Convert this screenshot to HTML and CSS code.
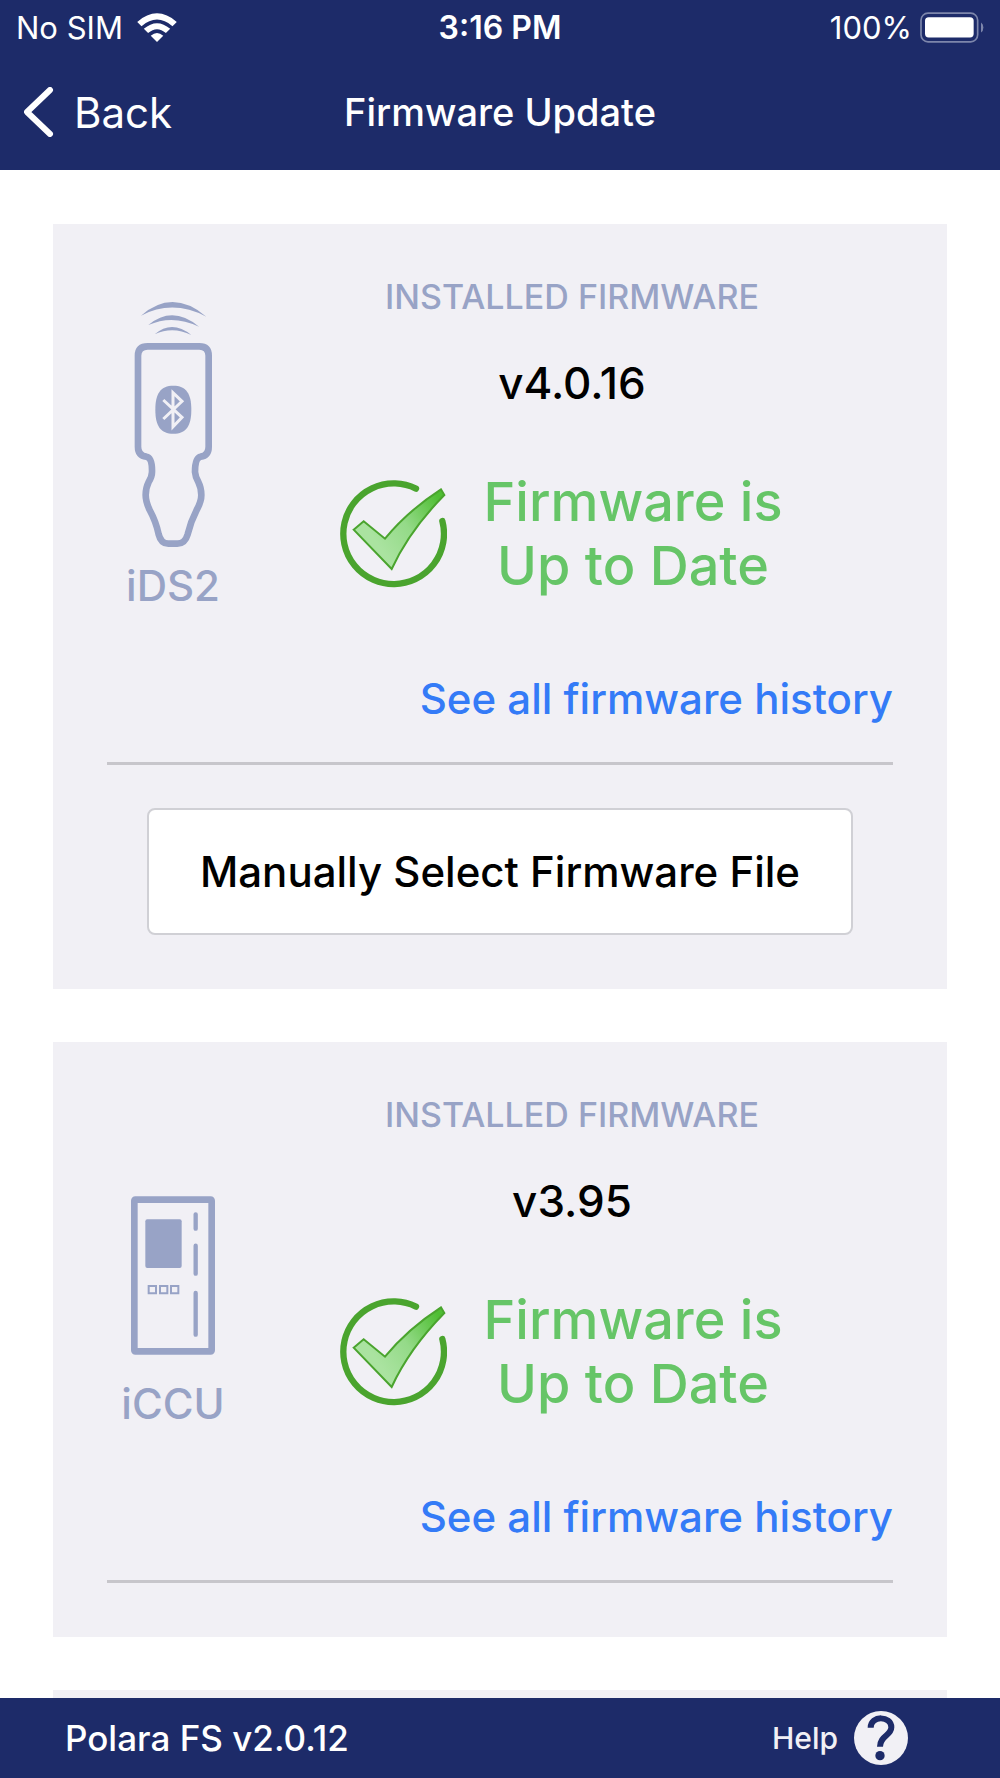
FILE: index.html
```html
<!DOCTYPE html>
<html lang="en">
<head>
    <meta charset="UTF-8">
    <meta name="viewport" content="width=device-width, initial-scale=1.0">
    <title>Firmware Update</title>
    <link rel="stylesheet" href="styles.css">
</head>
<body>
    <header class="header">
        <div class="status-bar">
            <div class="carrier">
                <span>No SIM</span>
                <svg class="wifi" viewBox="0 0 120 88" fill="#fff" aria-hidden="true">
                    <path d="M60 88 L41 69 Q60 53 79 69 Z"/>
                    <path d="M33 61 L20 48 Q60 14 100 48 L87 61 Q60 38 33 61 Z"/>
                    <path d="M13 40 L0 27 Q60 -25 120 27 L107 40 Q60 0 13 40 Z"/>
                </svg>
            </div>
            <span class="time">3:16 PM</span>
            <div class="battery">
                <span>100%</span>
                <svg class="battery-icon" viewBox="0 0 192 92" aria-hidden="true">
                    <rect x="3" y="3" width="170" height="86" rx="21" fill="none" stroke="#7d86ab" stroke-width="5"/>
                    <rect x="15" y="15" width="146" height="61" rx="11" fill="#fff"/>
                    <path d="M183 31 Q190 35 190 46 Q190 57 183 61 Z" fill="#7d86ab"/>
                </svg>
            </div>
        </div>
        <nav class="nav-bar">
            <a class="back" href="#">
                <svg class="chevron" viewBox="0 0 30 50" aria-hidden="true">
                    <path d="M26 3 L3 25 L26 47" fill="none" stroke="#fff" stroke-width="6" stroke-linecap="round" stroke-linejoin="round"/>
                </svg>
                <span>Back</span>
            </a>
            <h1>Firmware Update</h1>
        </nav>
    </header>

    <main class="content">
        <section class="card">
            <div class="card-body">
                <div class="device">
                    <svg class="device-icon" viewBox="21 66 396 750" fill="none" stroke="#98a3c6" aria-hidden="true">
                        <g fill="#98a3c6" stroke="none">
                            <path d="M123 107 Q218 24 319 110 Q218 57 123 107 Z"/>
                            <path d="M145 135 Q218 74 297 140 Q218 102 145 135 Z"/>
                            <path d="M164 163 Q216 118 274 165 Q218 138 164 163 Z"/>
                            <path d="M220 317 C258 317 274 340 274 389 C274 438 258 461 220 461 C182 461 166 438 166 389 C166 340 182 317 220 317 Z"/>
                        </g>
                        <path d="M143 199 H298 Q326 199 326 227 V500 Q326 527 302 530 Q285 533 285 576 Q286 590 295 606 Q304 624 304 645 Q304 665 290 690 Q272 725 263 763 Q255 791 232 791 H205 Q183 791 176 763 Q168 725 149 690 Q137 665 137 645 Q137 624 146 606 Q156 590 156 576 Q157 533 139 530 Q114 527 114 500 V227 Q114 199 143 199 Z" stroke-width="20"/>
                        <path d="M190 360 L246 412 L219 440 V338 L246 364 L190 417" stroke="#f1f0f5" stroke-width="9"/>
                    </svg>
                    <h2>iDS2</h2>
                </div>
                <div class="info">
                    <h3>INSTALLED FIRMWARE</h3>
                    <p class="version">v4.0.16</p>
                    <div class="status">
                        <svg class="check" viewBox="24 28 324 324" aria-hidden="true">
                            <defs>
                                <linearGradient id="tick" gradientUnits="userSpaceOnUse" x1="140" y1="220" x2="330" y2="90">
                                    <stop offset="0" stop-color="#aae3a0"/>
                                    <stop offset="0.45" stop-color="#94da88"/>
                                    <stop offset="1" stop-color="#4fbe33"/>
                                </linearGradient>
                            </defs>
                            <path d="M255 54 A151 151 0 1 0 334 151" fill="none" stroke="#4aa42e" stroke-width="19" stroke-linecap="round"/>
                            <path d="M68 177 L98 152 L162 204 Q230 121 330 56 L340 73 Q235 180 182 295 Z" fill="url(#tick)" stroke="#4aa42e" stroke-width="6"/>
                        </svg>
                        <p>Firmware is<br>Up to Date</p>
                    </div>
                    <a class="history" href="#">See all firmware history</a>
                </div>
            </div>
            <button class="btn" type="button">Manually Select Firmware File</button>
        </section>

        <section class="card">
            <div class="card-body">
                <div class="device">
                    <svg class="device-icon" viewBox="21 -150 396 750" fill="none" stroke="#98a3c6" aria-hidden="true">
                        <rect x="103" y="89" width="232" height="455" rx="3" stroke-width="20"/>
                        <rect x="136" y="148" width="109" height="146" rx="6" fill="#98a3c6" stroke="none"/>
                        <path d="M287 133 V176 M287 227 V311 M287 369 V494" stroke-width="13" stroke-linecap="round"/>
                        <path d="M146 348 H168 V370 H146 Z M180 348 H202 V370 H180 Z M213 348 H235 V370 H213 Z" stroke-width="6"/>
                    </svg>
                    <h2>iCCU</h2>
                </div>
                <div class="info">
                    <h3>INSTALLED FIRMWARE</h3>
                    <p class="version">v3.95</p>
                    <div class="status">
                        <svg class="check" viewBox="24 28 324 324" aria-hidden="true">
                            <path d="M255 54 A151 151 0 1 0 334 151" fill="none" stroke="#4aa42e" stroke-width="19" stroke-linecap="round"/>
                            <path d="M68 177 L98 152 L162 204 Q230 121 330 56 L340 73 Q235 180 182 295 Z" fill="url(#tick)" stroke="#4aa42e" stroke-width="6"/>
                        </svg>
                        <p>Firmware is<br>Up to Date</p>
                    </div>
                    <a class="history" href="#">See all firmware history</a>
                </div>
            </div>
        </section>

        <section class="card"></section>
    </main>

    <footer class="footer">
        <span class="app-version">Polara FS v2.0.12</span>
        <a class="help" href="#">
            <span>Help</span>
            <svg class="help-icon" viewBox="0 0 162 162" aria-hidden="true">
                <circle cx="81" cy="81" r="81" fill="#f1f0f5"/>
                <path d="M50 50 C50 12 112 14 112 49 C112 74 78 74 78 107" fill="none" stroke="#1d2b69" stroke-width="18"/>
                <circle cx="78" cy="134" r="14" fill="#1d2b69"/>
            </svg>
        </a>
    </footer>
</body>
</html>
```

FILE: styles.css
```css
:root {
    --navy: #1d2b69;
    --card: #f1f0f5;
    --muted: #98a3c6;
    --green: #66c567;
    --blue: #347bf7;
    --line: #c7c6cb;
}

* {
    margin: 0;
    padding: 0;
    box-sizing: border-box;
}

body {
    font-family: Inter, "Liberation Sans", sans-serif;
    font-weight: 500;
    background: white;
    color: black;
    height: 100vh;
    display: flex;
    flex-direction: column;
}

a {
    color: inherit;
    text-decoration: none;
}

svg {
    display: block;
    flex-shrink: 0;
}

/* Header */
.header {
    background: var(--navy);
    color: white;
    flex-shrink: 0;
}

.status-bar {
    display: grid;
    grid-template-columns: 1fr auto 1fr;
    align-items: center;
    height: 54px;
    padding: 0 16px;
    font-size: 31px;
    font-weight: 400;
}

.carrier,
.battery {
    display: flex;
    align-items: center;
    gap: 14px;
}

.battery {
    justify-content: flex-end;
    gap: 8px;
}

.time {
    font-size: 32px;
    font-weight: 600;
}

.wifi {
    width: 40px;
    height: 29px;
}

.battery-icon {
    width: 64px;
    height: 31px;
}

.nav-bar {
    display: grid;
    grid-template-columns: 1fr auto 1fr;
    align-items: center;
    height: 116px;
    padding: 0 24px;
}

.back {
    display: flex;
    align-items: center;
    gap: 20px;
    font-size: 42px;
    font-weight: 400;
}

.chevron {
    width: 30px;
    height: 50px;
}

h1 {
    font-size: 38px;
    font-weight: 500;
}

/* Cards */
.content {
    flex: 1;
    min-height: 0;
    overflow-y: auto;
    scrollbar-width: none;
    padding: 54px 53px;
    display: flex;
    flex-direction: column;
    gap: 53px;
}

.card {
    background: var(--card);
    padding: 54px;
    flex-shrink: 0;
}

.card-body {
    display: grid;
    grid-template-columns: 132px 1fr;
    gap: 12px;
    padding-bottom: 39px;
    border-bottom: 3px solid var(--line);
}

.device {
    padding-top: 24px;
    color: var(--muted);
    text-align: center;
}

.device-icon {
    width: 132px;
    height: 250px;
}

h2 {
    margin-top: 8px;
    font-size: 42px;
    font-weight: 500;
    line-height: 52px;
}

.info {
    display: flex;
    flex-direction: column;
    align-items: center;
}

h3 {
    color: var(--muted);
    font-size: 34px;
    font-weight: 500;
    line-height: 38px;
}

.version {
    margin-top: 40px;
    font-size: 44px;
    line-height: 54px;
}

.status {
    display: flex;
    align-items: center;
    gap: 36px;
    margin-top: 60px;
    padding-right: 22px;
    color: var(--green);
    font-size: 54px;
    line-height: 64px;
    text-align: center;
}

.check {
    width: 108px;
    height: 108px;
}

.history {
    align-self: flex-end;
    margin-top: 77px;
    color: var(--blue);
    font-size: 42px;
    line-height: 48px;
}

.btn {
    display: block;
    width: calc(100% - 80px);
    height: 127px;
    margin: 43px auto 0;
    background: white;
    color: black;
    border: 2px solid #d0d0d5;
    border-radius: 8px;
    font: inherit;
    font-size: 42px;
    cursor: pointer;
}

/* Footer */
.footer {
    display: flex;
    align-items: center;
    justify-content: space-between;
    flex-shrink: 0;
    height: 80px;
    padding: 0 92px 0 65px;
    background: var(--navy);
    color: white;
}

.app-version {
    font-size: 35px;
}

.help {
    display: flex;
    align-items: center;
    gap: 16px;
    color: var(--card);
    font-size: 30px;
}

.help-icon {
    width: 54px;
    height: 54px;
}
```
